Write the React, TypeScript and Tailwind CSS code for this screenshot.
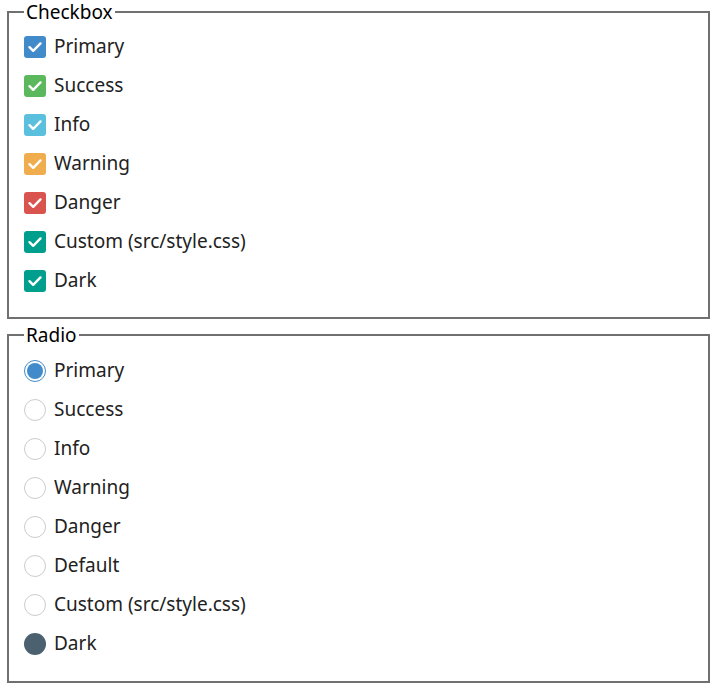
import React from "react";

const checkItems: { label: string; color: string }[] = [
  { label: "Primary", color: "bg-[#428bca]" },
  { label: "Success", color: "bg-[#5cb85c]" },
  { label: "Info", color: "bg-[#5bc0de]" },
  { label: "Warning", color: "bg-[#f0ad4e]" },
  { label: "Danger", color: "bg-[#d9534f]" },
  { label: "Custom (src/style.css)", color: "bg-[#009e8c]" },
  { label: "Dark", color: "bg-[#009e8c]" },
];

const radioItems: { label: string; kind: "primary" | "empty" | "dark" }[] = [
  { label: "Primary", kind: "primary" },
  { label: "Success", kind: "empty" },
  { label: "Info", kind: "empty" },
  { label: "Warning", kind: "empty" },
  { label: "Danger", kind: "empty" },
  { label: "Default", kind: "empty" },
  { label: "Custom (src/style.css)", kind: "empty" },
  { label: "Dark", kind: "dark" },
];

function Check({ color }: { color: string }) {
  return (
    <span className={`flex h-[22px] w-[22px] shrink-0 items-center justify-center rounded-[3px] ${color}`}>
      <svg width="22" height="22" viewBox="0 0 22 22" fill="none">
        <path d="M5.5 11.2 L9.2 14.8 L16.5 7.4" stroke="white" strokeWidth="2.4" strokeLinecap="round" strokeLinejoin="round" />
      </svg>
    </span>
  );
}

function Radio({ kind }: { kind: "primary" | "empty" | "dark" }) {
  if (kind === "primary") {
    return (
      <span className="flex h-[22px] w-[22px] shrink-0 items-center justify-center rounded-full border border-[#428bca] bg-white">
        <span className="h-[16px] w-[16px] rounded-full bg-[#428bca]" />
      </span>
    );
  }
  if (kind === "dark") {
    return <span className="h-[22px] w-[22px] shrink-0 rounded-full bg-[#4b6170]" />;
  }
  return <span className="h-[22px] w-[22px] shrink-0 rounded-full border border-[#cccccc] bg-white" />;
}

export default function App() {
  return (
    <div className="min-h-[688px] bg-white text-[#222222] [font-family:'Noto_Sans',sans-serif]">
      <fieldset className="ml-[7px] mr-[6px] border-2 border-solid border-[#707070] px-[15px] pb-[17px] pt-[3px]">
        <legend className="px-[2px] text-[19px] leading-[24px] text-black">Checkbox</legend>
        {checkItems.map((it) => (
          <div key={it.label} className="flex h-[39px] items-center gap-[8px] text-[19px]">
            <Check color={it.color} />
            <span>{it.label}</span>
          </div>
        ))}
      </fieldset>
      <fieldset className="ml-[7px] mr-[6px] mt-[4px] border-2 border-solid border-[#707070] px-[15px] pb-[18px] pt-[4px]">
        <legend className="px-[2px] text-[19px] leading-[24px] text-black">Radio</legend>
        {radioItems.map((it) => (
          <div key={it.label} className="flex h-[39px] items-center gap-[8px] text-[19px]">
            <Radio kind={it.kind} />
            <span>{it.label}</span>
          </div>
        ))}
      </fieldset>
    </div>
  );
}
